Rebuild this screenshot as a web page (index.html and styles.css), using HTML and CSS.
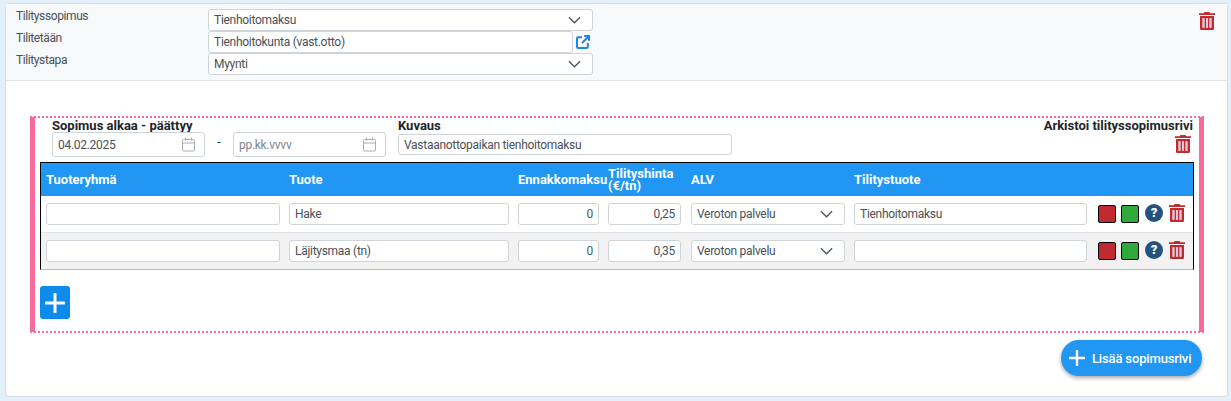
FILE: index.html
```html
<!DOCTYPE html>
<html lang="fi">
<head>
<meta charset="utf-8">
<title>Tilityssopimus</title>
<link rel="stylesheet" href="styles.css">
</head>
<body>
<svg class="defs" width="0" height="0" aria-hidden="true">
  <symbol id="trash" viewBox="0 0 16 18">
    <path d="M5.500 0h5l.8 1.200H16v1.800H0V1.200h4.700z" fill="currentColor"/>
    <path fill-rule="evenodd" d="M1 4h14V16.700a1.300 1.300 0 0 1-1.300 1.300H2.300A1.300 1.300 0 0 1 1 16.700zM3.600 6.200v9.600h1.800V6.200zM7.100 6.200v9.600h1.800V6.200zM10.600 6.200v9.600h1.800V6.200z" fill="currentColor"/>
    <path d="M3.600 6.200h1.800v9.600H3.600zM7.100 6.200h1.800v9.600H7.100zM10.600 6.200h1.800v9.600h-1.800z" fill="#d9c6dc"/>
  </symbol>
  <symbol id="chevron" viewBox="0 0 14 8">
    <path d="M1 1l6 6 6-6" fill="none" stroke="currentColor" stroke-width="1.300"/>
  </symbol>
  <symbol id="calendar" viewBox="0 0 13 15">
    <path d="M1.500 2.500h10a1 1 0 0 1 1 1v9.500a1 1 0 0 1-1 1h-10a1 1 0 0 1-1-1V3.500a1 1 0 0 1 1-1zM.5 6h12M3.500.5v3M9.500.5v3" fill="none" stroke="currentColor"/>
  </symbol>
  <symbol id="plus" viewBox="0 0 20 20">
    <path d="M10 1v18M1 10h18" fill="none" stroke="currentColor" stroke-width="3" stroke-linecap="round"/>
  </symbol>
</svg>

<main class="panel">
  <header class="head">
    <div class="head-fields">
      <label class="head-row"><span class="head-label">Tilityssopimus</span>
        <span class="control control-wide"><select class="field"><option>Tienhoitomaksu</option></select><svg class="chevron"><use href="#chevron"/></svg></span>
      </label>
      <label class="head-row"><span class="head-label">Tilitetään</span>
        <input class="field field-linked" value="Tienhoitokunta (vast.otto)">
        <svg class="link-icon" viewBox="0 0 14 14" aria-hidden="true"><path d="M6 2.200H2.200A1.200 1.200 0 0 0 1 3.400v8.400A1.200 1.200 0 0 0 2.200 13h8.400a1.200 1.200 0 0 0 1.200-1.200V8M8.200 1H13v4.800M13 1L6 8" fill="none" stroke="currentColor" stroke-width="2"/></svg>
      </label>
      <label class="head-row"><span class="head-label">Tilitystapa</span>
        <span class="control control-wide"><select class="field"><option>Myynti</option></select><svg class="chevron"><use href="#chevron"/></svg></span>
      </label>
    </div>
    <svg class="trash trash-head"><use href="#trash"/></svg>
  </header>

  <section class="content">
    <div class="contract">
      <div class="meta">
        <div class="dates">
          <div class="meta-title">Sopimus alkaa - päättyy</div>
          <div class="date-row">
            <span class="control control-date"><input class="field" value="04.02.2025"><svg class="calendar"><use href="#calendar"/></svg></span>
            <span class="dash">-</span>
            <span class="control control-date"><input class="field" placeholder="pp.kk.vvvv"><svg class="calendar"><use href="#calendar"/></svg></span>
          </div>
        </div>
        <div class="desc">
          <div class="meta-title">Kuvaus</div>
          <input class="field field-desc" value="Vastaanottopaikan tienhoitomaksu">
        </div>
        <div class="archive">
          <div class="meta-title">Arkistoi tilityssopimusrivi</div>
          <svg class="trash trash-archive"><use href="#trash"/></svg>
        </div>
      </div>

      <div class="table">
        <div class="grid thead">
          <span>Tuoteryhmä</span>
          <span>Tuote</span>
          <span>Ennakkomaksu</span>
          <span class="th-wrap">Tilityshinta (€/tn)</span>
          <span>ALV</span>
          <span>Tilitystuote</span>
        </div>
        <div class="grid row">
          <input class="field">
          <input class="field" value="Hake">
          <input class="field num num-zero" value="0">
          <input class="field num num-price" value="0,25">
          <span class="control"><select class="field"><option>Veroton palvelu</option></select><svg class="chevron"><use href="#chevron"/></svg></span>
          <input class="field" value="Tienhoitomaksu">
          <div class="actions">
            <span class="swatch swatch-red"></span>
            <span class="swatch swatch-green"></span>
            <span class="help">?</span>
            <svg class="trash trash-row"><use href="#trash"/></svg>
          </div>
        </div>
        <div class="grid row row-alt">
          <input class="field">
          <input class="field" value="Läjitysmaa (tn)">
          <input class="field num num-zero" value="0">
          <input class="field num num-price" value="0,35">
          <span class="control"><select class="field"><option>Veroton palvelu</option></select><svg class="chevron"><use href="#chevron"/></svg></span>
          <input class="field">
          <div class="actions">
            <span class="swatch swatch-red"></span>
            <span class="swatch swatch-green"></span>
            <span class="help">?</span>
            <svg class="trash trash-row"><use href="#trash"/></svg>
          </div>
        </div>
      </div>

      <button class="add-square" type="button" aria-label="Lisää"><svg class="plus-square"><use href="#plus"/></svg></button>
    </div>
    <div class="foot">
      <button class="add-pill" type="button"><svg class="plus-pill"><use href="#plus"/></svg>Lisää sopimusrivi</button>
    </div>
  </section>
</main>
</body>
</html>
```
FILE: styles.css
```css
* { box-sizing: border-box; }
html, body { height: 100%; }
body {
  margin: 0;
  padding: 3px 3px 4px 5px;
  background: #e3f0fa;
  font-family: Roboto, "Liberation Sans", sans-serif;
  font-size: 12px;
  color: #495057;
  overflow: hidden;
}
.defs { position: absolute; }
.panel {
  height: 394px;
  background: #fff;
  border: 1px solid #d6dde5;
  border-radius: 3px;
}
.head {
  display: flex;
  justify-content: space-between;
  height: 77px;
  padding: 5px 12px 0 10px;
  background: #f8f9fb;
  border-bottom: 1px solid #dee2e6;
}
.head-fields { display: flex; flex-direction: column; }
.head-row { display: flex; align-items: center; height: 22px; }
.head-label {
  width: 192px;
  margin-top: -8px;
  letter-spacing: -.4px;
}
.control { position: relative; display: block; }
.control-wide { width: 385px; }
.field {
  display: block;
  width: 100%;
  height: 22px;
  padding: 0 5px;
  background: #fff;
  border: 1px solid #ced4da;
  border-radius: 3px;
  color: #495057;
  font: inherit;
  letter-spacing: -.28px;
  outline: 0;
  appearance: none;
}
.field::placeholder { color: #7d868e; opacity: 1; }
.field-linked { width: 365px; }
.chevron {
  position: absolute;
  top: 7px;
  right: 12px;
  width: 13px;
  height: 8px;
  color: #4a5157;
  pointer-events: none;
}
.link-icon { width: 14px; height: 14px; margin-left: 3px; color: #1c86e0; }
.trash { color: #c12b2f; flex: none; }
.trash-head { width: 16px; height: 18px; margin-top: 3px; }
.content { padding: 35px 0 0 24px; }
.contract {
  width: 1174px;
  padding: 0 5px 12px;
  border-left: 5px solid #f56c9c;
  border-right: 5px solid #f56c9c;
  border-top: 2px dotted #f56c9c;
  border-bottom: 2px dotted #f56c9c;
}
.meta { display: flex; height: 44px; padding: 1px 1px 0 12px; }
.meta-title {
  height: 13px;
  font-size: 13px;
  line-height: 13px;
  font-weight: 700;
  color: #212529;
  white-space: nowrap;
}
.dates { width: 334px; }
.date-row { display: flex; align-items: center; }
.control-date { width: 153px; }
.control-date .field { height: 25px; }
.calendar {
  position: absolute;
  top: 5px;
  right: 10px;
  width: 13px;
  height: 15px;
  color: #a8adb2;
}
.dash { width: 28px; text-align: center; color: #212529; margin-top: -5px; }
.desc { margin-left: 12px; width: 334px; }
.field-desc { height: 21px; margin-top: 2px; }
.archive {
  margin-left: auto;
  display: flex;
  flex-direction: column;
  align-items: flex-end;
}
.trash-archive { width: 16px; height: 18px; margin: 3px 2px 0 0; }
.table {
  width: 1154px;
  border-left: 1px solid #000;
  border-right: 1px solid #000;
  border-top: 1px solid #000;
  border-bottom: 1px solid #bbb;
}
.grid {
  display: grid;
  grid-template-columns: 234px 220px 81px 74px 154px 233px 1fr;
  column-gap: 9px;
  align-items: center;
  padding-left: 5px;
}
.thead {
  height: 33px;
  background: #2196f3;
  color: #fff;
  font-size: 13px;
  font-weight: 700;
  line-height: 12px;
}
.th-wrap { white-space: normal; width: 72px; }
.row { height: 36px; }
.row-alt {
  height: 37px;
  border-top: 1px solid #dee2e6;
  background: #f2f2f2;
}
.num { text-align: right; }
.num-zero { color: #3f5f5a; }
.num-price { width: 73px; }
.actions { display: flex; align-items: center; padding-left: 2px; }
.swatch {
  width: 18px;
  height: 18px;
  margin-right: 5px;
  border: 1px solid #000;
  border-radius: 2px;
}
.swatch-red { background: #c12b2f; }
.swatch-green { background: #2fa93a; }
.help {
  width: 18px;
  height: 18px;
  margin: -2px 6px 0 1px;
  border-radius: 50%;
  background: #24527f;
  color: #fff;
  font-size: 13px;
  font-weight: 900;
  line-height: 18px;
  text-align: center;
}
.trash-row { width: 16px; height: 18px; margin-top: -2px; }
.add-square {
  display: flex;
  align-items: center;
  justify-content: center;
  width: 30px;
  height: 33px;
  margin-top: 16px;
  padding: 0;
  background: #0d8bec;
  border: 0;
  border-radius: 3px;
  color: #fff;
}
.plus-square { width: 20px; height: 20px; }
.foot { display: flex; justify-content: flex-end; width: 1172px; margin-top: 7px; }
.add-pill {
  display: flex;
  align-items: center;
  width: 141px;
  height: 36px;
  padding: 0 0 0 8px;
  background: #2196f3;
  border: 0;
  border-radius: 18px;
  box-shadow: 0 2px 4px rgba(0, 0, 0, .35);
  color: #fff;
  font: inherit;
  font-size: 13px;
  font-weight: 500;
  letter-spacing: -.15px;
  white-space: nowrap;
}
.plus-pill { width: 16px; height: 16px; margin-right: 7px; }
```
